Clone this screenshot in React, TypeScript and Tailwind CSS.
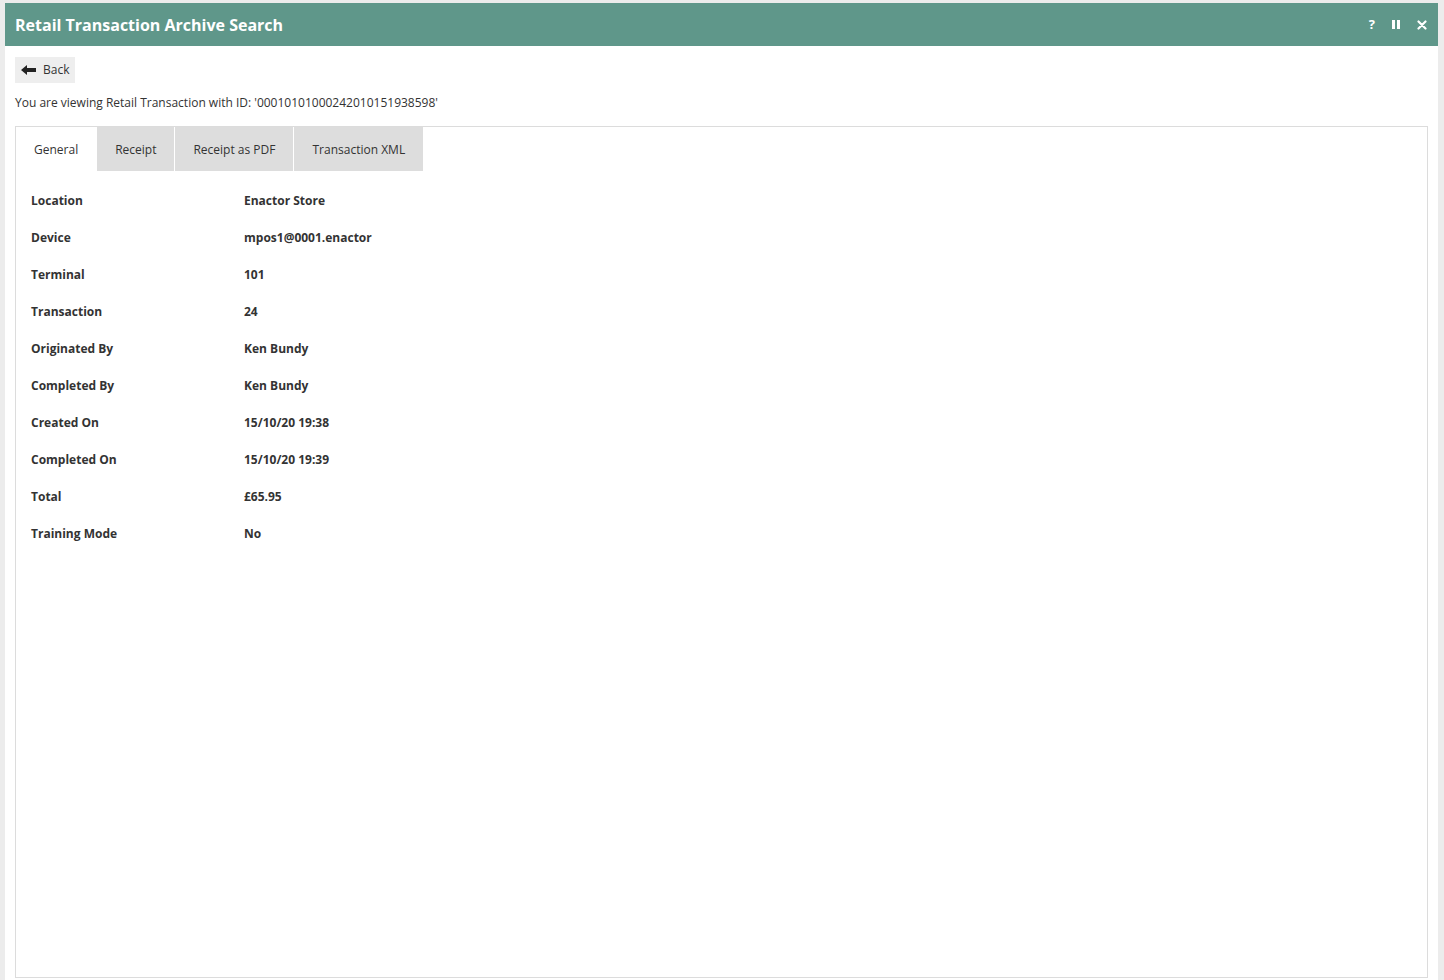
import React, { useState } from 'react';

const rows: [string, string][] = [
  ['Location', 'Enactor Store'],
  ['Device', 'mpos1@0001.enactor'],
  ['Terminal', '101'],
  ['Transaction', '24'],
  ['Originated By', 'Ken Bundy'],
  ['Completed By', 'Ken Bundy'],
  ['Created On', '15/10/20 19:38'],
  ['Completed On', '15/10/20 19:39'],
  ['Total', '£65.95'],
  ['Training Mode', 'No'],
];

const tabs = ['General', 'Receipt', 'Receipt as PDF', 'Transaction XML'];

export default function App() {
  const [tab, setTab] = useState('General');

  return (
    <div
      className="h-[980px] bg-[#ececec] pl-[5px] pr-[6px] pt-[3px] overflow-hidden text-[#333]"
      style={{ fontFamily: '"Open Sans", "Liberation Sans", sans-serif' }}
    >
      <div className="h-full flex flex-col bg-white">
        {/* Header */}
        <div className="h-[43px] shrink-0 bg-[#5f978a] flex items-center justify-between pl-[10px] pr-[11px]">
          <h1 className="text-[16px] font-bold text-white">Retail Transaction Archive Search</h1>
          <div className="flex items-center gap-[17px] text-white font-bold text-[13px]">
            <span>?</span>
            <span className="flex gap-[2px] h-[9px]">
              <span className="w-[3px] h-full bg-white" />
              <span className="w-[3px] h-full bg-white" />
            </span>
            <svg width="10" height="10" viewBox="0 0 10 10">
              <path d="M1.5 1.5 L8.5 8.5 M8.5 1.5 L1.5 8.5" stroke="white" strokeWidth="2.2" strokeLinecap="round" />
            </svg>
          </div>
        </div>

        {/* Body */}
        <div className="flex-1 flex flex-col pl-[10px] pr-[10px] pt-[11px] pb-[2px] min-h-0">
          <button className="self-start h-[26px] flex items-center gap-[7px] px-[6px] bg-[#eeeeee] text-[12px] text-[#333]">
            <svg width="15" height="10" viewBox="0 0 15 10">
              <path d="M0 5 L6 0 L6 3 L15 3 L15 7 L6 7 L6 10 Z" fill="#222" />
            </svg>
            Back
          </button>
          <p className="mt-[11px] text-[12px] text-[#333]">
            You are viewing Retail Transaction with ID: '00010101000242010151938598'
          </p>

          <div className="mt-[14px] flex-1 border border-[#dcdcdc] flex flex-col">
            <div className="flex">
              {tabs.map((t) => (
                <button
                  key={t}
                  onClick={() => setTab(t)}
                  className={
                    'h-[44px] px-[18px] pt-[2px] text-[12px] text-[#333] border-r border-white ' +
                    (tab === t ? 'bg-white' : 'bg-[#dddddd]')
                  }
                >
                  {t}
                </button>
              ))}
            </div>
            <div className="pl-[15px] pt-[11px]">
              {rows.map(([label, value]) => (
                <div key={label} className="flex h-[37px] items-center text-[12px] font-bold text-[#333]">
                  <span className="w-[213px]">{label}</span>
                  <span>{value}</span>
                </div>
              ))}
            </div>
          </div>
        </div>
      </div>
    </div>
  );
}
